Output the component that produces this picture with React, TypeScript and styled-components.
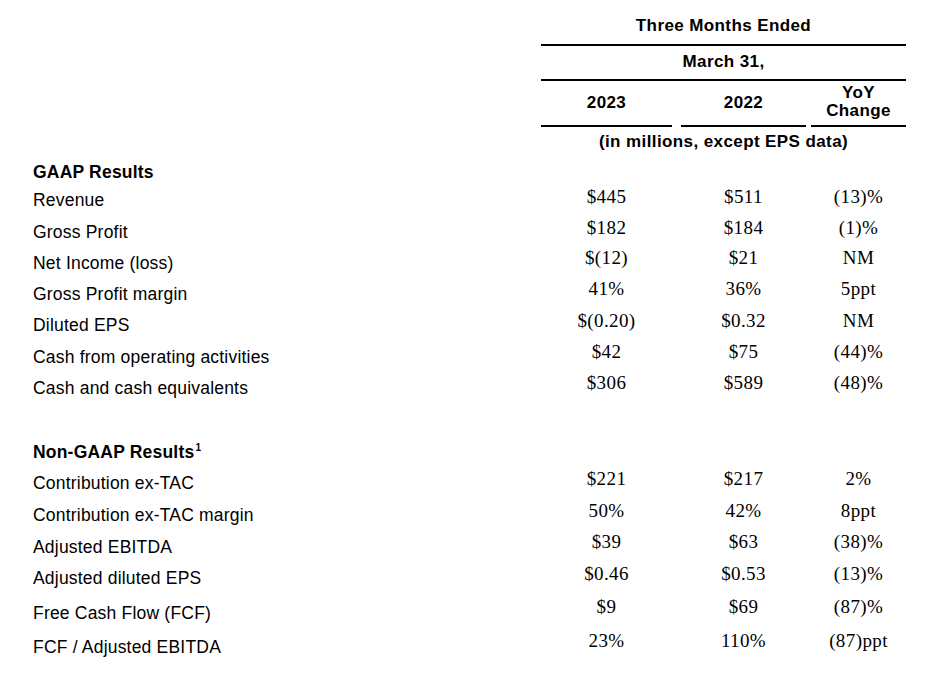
import React from "react";
import styled, { createGlobalStyle } from "styled-components";

const GlobalStyle = createGlobalStyle`
  html, body { margin: 0; padding: 0; background: #ffffff; }
  body { font-family: "Liberation Sans", Arial, sans-serif; color: #000; }
`;

const COLS = "508px 131px 9px 125px 5px 95px";

const Page = styled.div`
  width: 930px;
  height: 676px;
  padding-left: 33px;
  box-sizing: border-box;
  overflow: hidden;
`;

const Table = styled.div`
  display: flex;
  flex-direction: column;
`;

const Row = styled.div<{ $h: number }>`
  display: grid;
  grid-template-columns: ${COLS};
  height: ${(p) => p.$h}px;
  box-sizing: border-box;
`;

const HeadCell = styled.div<{ $col: string; $pad: number; $rule?: boolean }>`
  grid-column: ${(p) => p.$col};
  box-sizing: border-box;
  padding-top: ${(p) => p.$pad}px;
  text-align: center;
  font-weight: 700;
  font-size: 17px;
  line-height: 20px;
  letter-spacing: 0.4px;
  border-bottom: ${(p) => (p.$rule ? "2px solid #000" : "none")};
`;

const YoyCell = styled(HeadCell)`
  line-height: 18px;
`;

const Label = styled.div<{ $pad: number; $bold?: boolean }>`
  grid-column: 1;
  padding-top: ${(p) => p.$pad}px;
  font-size: 17.5px;
  line-height: 20px;
  letter-spacing: 0.2px;
  font-weight: ${(p) => (p.$bold ? 700 : 400)};
  white-space: nowrap;
`;

const Sup = styled.sup`
  font-size: 10px;
  line-height: 0;
  vertical-align: 7px;
  margin-left: 1px;
`;

const Value = styled.div<{ $col: number; $pad: number }>`
  grid-column: ${(p) => p.$col};
  padding-top: ${(p) => p.$pad}px;
  text-align: center;
  font-family: "Liberation Serif", "Times New Roman", serif;
  font-size: 19px;
  line-height: 22px;
  letter-spacing: 0.4px;
  white-space: nowrap;
`;

type DataRow = {
  label: string;
  v: [string, string, string];
  h: number;
  lp: number;
  vp: number;
};

const gaap: DataRow[] = [
  { label: "Revenue", v: ["$445", "$511", "(13)%"], h: 31, lp: 7, vp: 3 },
  { label: "Gross Profit", v: ["$182", "$184", "(1)%"], h: 30, lp: 8, vp: 3 },
  { label: "Net Income (loss)", v: ["$(12)", "$21", "NM"], h: 31, lp: 9, vp: 3 },
  { label: "Gross Profit margin", v: ["41%", "36%", "5ppt"], h: 31, lp: 9, vp: 3 },
  { label: "Diluted EPS", v: ["$(0.20)", "$0.32", "NM"], h: 31, lp: 9, vp: 4 },
  { label: "Cash from operating activities", v: ["$42", "$75", "(44)%"], h: 31, lp: 10, vp: 4 },
  { label: "Cash and cash equivalents", v: ["$306", "$589", "(48)%"], h: 31, lp: 10, vp: 4 },
];

const nonGaap: DataRow[] = [
  { label: "Contribution ex-TAC", v: ["$221", "$217", "2%"], h: 32, lp: 8, vp: 3 },
  { label: "Contribution ex-TAC margin", v: ["50%", "42%", "8ppt"], h: 30, lp: 8, vp: 3 },
  { label: "Adjusted EBITDA", v: ["$39", "$63", "(38)%"], h: 32, lp: 10, vp: 4 },
  { label: "Adjusted diluted EPS", v: ["$0.46", "$0.53", "(13)%"], h: 31, lp: 9, vp: 4 },
  { label: "Free Cash Flow (FCF)", v: ["$9", "$69", "(87)%"], h: 35, lp: 13, vp: 6 },
  { label: "FCF / Adjusted EBITDA", v: ["23%", "110%", "(87)ppt"], h: 31, lp: 12, vp: 5 },
];

const renderRows = (rows: DataRow[]) =>
  rows.map((r) => (
    <Row key={r.label} $h={r.h}>
      <Label $pad={r.lp}>{r.label}</Label>
      <Value $col={2} $pad={r.vp}>{r.v[0]}</Value>
      <Value $col={4} $pad={r.vp}>{r.v[1]}</Value>
      <Value $col={6} $pad={r.vp}>{r.v[2]}</Value>
    </Row>
  ));

export default function App() {
  return (
    <Page>
      <GlobalStyle />
      <Table>
        <Row $h={46}>
          <HeadCell $col="2 / 7" $pad={16} $rule>
            Three Months Ended
          </HeadCell>
        </Row>
        <Row $h={35}>
          <HeadCell $col="2 / 7" $pad={6} $rule>
            March 31,
          </HeadCell>
        </Row>
        <Row $h={46}>
          <HeadCell $col="2" $pad={12} $rule>
            2023
          </HeadCell>
          <HeadCell $col="4" $pad={12} $rule>
            2022
          </HeadCell>
          <YoyCell $col="6" $pad={3} $rule>
            YoY
            <br />
            Change
          </YoyCell>
        </Row>
        <Row $h={30}>
          <HeadCell $col="2 / 7" $pad={5}>
            (in millions, except EPS data)
          </HeadCell>
        </Row>
        <Row $h={26}>
          <Label $pad={5} $bold>
            GAAP Results
          </Label>
        </Row>
        {renderRows(gaap)}
        <Row $h={36} />
        <Row $h={30}>
          <Label $pad={7} $bold>
            Non-GAAP Results<Sup>1</Sup>
          </Label>
        </Row>
        {renderRows(nonGaap)}
      </Table>
    </Page>
  );
}
